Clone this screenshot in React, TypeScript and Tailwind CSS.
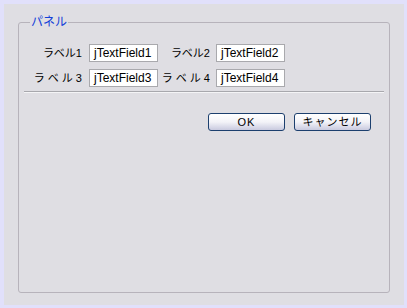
import React from "react";

const font = { fontFamily: '"Liberation Sans", "Noto Sans CJK JP", sans-serif' };

const Field: React.FC<{ value: string }> = ({ value }) => (
  <div className="w-[69px] h-[18px] bg-white border border-[#a9a9ad] px-[4px] text-[12px] leading-[16px] text-black overflow-hidden whitespace-nowrap">
    {value}
  </div>
);

const Btn: React.FC<{ label: string }> = ({ label }) => (
  <button className="w-[77px] h-[18px] rounded-[3px] border border-[#1c3f6e] bg-gradient-to-b from-white via-[#f3f3f8] to-[#c9cadf] text-[11px] leading-[16px] tracking-[1px] text-black">
    {label}
  </button>
);

export default function App() {
  return (
    <div
      className="w-[407px] h-[308px] bg-[#e1e0fb] pt-[4px] pl-[4px] pr-[3px] pb-[3px]"
      style={font}
    >
      <div className="w-full h-full bg-[#dfdee3] pt-[10px] px-[14px] pb-[12px]">
        <fieldset className="h-full border border-[#b7b3bb] rounded-[3px] px-[5px]">
          <legend className="ml-[6px] px-[1px] text-[12px] leading-[16px] text-[#1240d8]">
            パネル
          </legend>
          <div className="flex flex-col gap-[7px] mt-[14px] text-[11px] leading-[18px] text-black">
            <div className="flex items-center">
              <span className="w-[58px] text-right">ラベル1</span>
              <span className="w-[7px]" />
              <Field value="jTextField1" />
              <span className="w-[52px] text-right">ラベル2</span>
              <span className="w-[6px]" />
              <Field value="jTextField2" />
            </div>
            <div className="flex items-center">
              <span className="w-[58px] text-right">ラ ベ ル 3</span>
              <span className="w-[7px]" />
              <Field value="jTextField3" />
              <span className="w-[52px] text-right">ラ ベ ル 4</span>
              <span className="w-[6px]" />
              <Field value="jTextField4" />
            </div>
          </div>
          <div className="mt-[4px] border-t border-[#a8a8ad] border-b border-b-[#f4f4f6]" />
          <div className="flex justify-end gap-[9px] mt-[20px] pr-[13px]">
            <Btn label="OK" />
            <Btn label="キャンセル" />
          </div>
        </fieldset>
      </div>
    </div>
  );
}
